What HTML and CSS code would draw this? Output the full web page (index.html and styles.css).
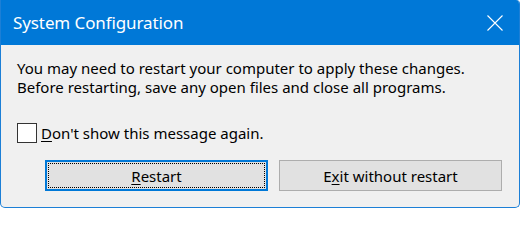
FILE: index.html
```html
<!DOCTYPE html>
<html>
<head>
<meta charset="utf-8">
<link rel="stylesheet" href="styles.css">
</head>
<body>
<div class="window">
  <div class="titlebar">
    <span class="title">System Configuration</span>
    <svg class="close" width="16" height="16" viewBox="0 0 16 16"><path d="M0.5 0.5 L15.5 15.5 M15.5 0.5 L0.5 15.5" stroke="#fff" stroke-width="1.1" fill="none"/></svg>
  </div>
  <div class="content">
    <p class="msg">You may need to restart your computer to apply these changes.<br>Before restarting, save any open files and close all programs.</p>
    <label class="check"><span class="box"></span><span><u>D</u>on't show this message again.</span></label>
    <div class="buttons">
      <button class="btn default"><span class="focus"><u>R</u>estart</span></button>
      <button class="btn">E<u>x</u>it without restart</button>
    </div>
  </div>
</div>
</body>
</html>
```
FILE: styles.css
```css
html, body { margin: 0; padding: 0; background: #ffffff; }
body { font-family: "Noto Sans", "Open Sans", sans-serif; }
.window {
  box-sizing: border-box;
  width: 520px;
  height: 208px;
  border: 1px solid #1c7fd6;
  border-top: 0;
  border-radius: 0 4px 5px 5px;
  background: #f0f0f0;
  overflow: hidden;
  display: flex;
  flex-direction: column;
}
.titlebar {
  height: 45px;
  background: #0078d7;
  display: flex;
  align-items: center;
  justify-content: space-between;
  padding: 0 16px 0 12px;
  flex: none;
}
.title { color: #fff; font-size: 17px; letter-spacing: -0.1px; }
.close { display: block; margin-top: 0; }
.content { padding: 14px 16px 0 16px; font-size: 15px; color: #000; }
.msg { margin: 0; line-height: 19px; }
.check { display: flex; align-items: center; gap: 4px; margin-top: 26px; }
.box { width: 18px; height: 18px; border: 1px solid #333; background: #fff; flex: none; }
.buttons { display: flex; gap: 11px; margin-top: 17px; padding-left: 28px; }
.btn {
  box-sizing: border-box;
  width: 223px;
  height: 31px;
  background: #e1e1e1;
  border: 1px solid #adadad;
  font: inherit;
  color: #000;
  padding: 0;
  display: flex;
  align-items: center;
  justify-content: center;
}
.btn.default { border: 2px solid #0078d7; padding: 1px; }
.focus { flex: 1; align-self: stretch; display: flex; align-items: center; justify-content: center; outline: 1px dotted #000; outline-offset: -1px; }
u { text-decoration-thickness: 1px; text-underline-offset: 2px; }
```
